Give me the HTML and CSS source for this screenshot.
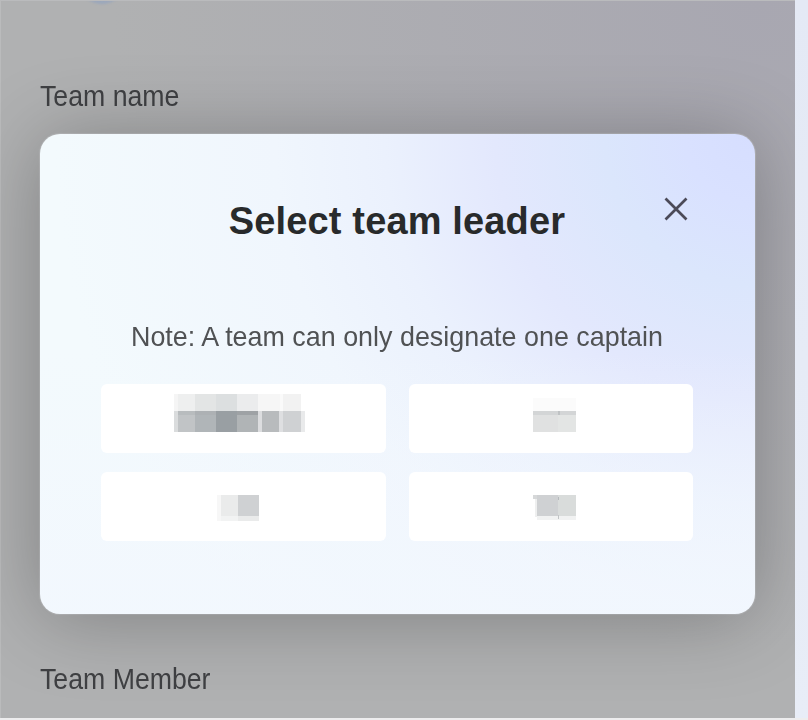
FILE: index.html
```html
<!DOCTYPE html>
<html lang="en">

<head>
  <meta charset="UTF-8">
  <title>Select team leader</title>
  <link rel="stylesheet" href="styles.css">
</head>

<body>
  <!-- Team form behind the dialog -->
  <div class="page">
    <div class="avatar"></div>
    <p class="label">Team name</p>
    <p class="label">Team Member</p>
  </div>

  <!-- Team leader dialog -->
  <div class="overlay">
    <div class="modal">
      <div class="header">
        <h1>Select team leader</h1>
        <button class="close" aria-label="Close">
          <svg width="24" height="24" viewBox="0 0 24 24">
            <path d="M1.5 1.5L22.5 22.5M22.5 1.5L1.5 22.5" />
          </svg>
        </button>
      </div>
      <p class="note">Note: A team can only designate one captain</p>

      <!-- Members to choose from, names are masked -->
      <div class="options">
        <div class="option">
          <svg class="mask" width="131" height="38" viewBox="0 0 131 38">
            <rect x="0" y="0" width="4" height="17" fill="#f5f5f5" />
            <rect x="4" y="0" width="17" height="17" fill="#eeefef" />
            <rect x="21" y="0" width="21" height="17" fill="#e3e5e5" />
            <rect x="42" y="0" width="21" height="17" fill="#dcdfe0" />
            <rect x="63" y="0" width="21" height="17" fill="#ebeced" />
            <rect x="84" y="0" width="22" height="17" fill="#f6f6f6" />
            <rect x="106" y="0" width="3" height="17" fill="#fafafa" />
            <rect x="109" y="0" width="18" height="17" fill="#f2f2f2" />
            <rect x="0" y="17" width="4" height="21" fill="#dadcdd" />
            <rect x="4" y="17" width="17" height="21" fill="#c1c4c6" />
            <rect x="21" y="17" width="21" height="21" fill="#b0b5b8" />
            <rect x="42" y="17" width="21" height="21" fill="#999fa3" />
            <rect x="63" y="17" width="21" height="21" fill="#b0b4b6" />
            <rect x="63" y="17" width="21" height="4" fill="#9ea2a5" />
            <rect x="84" y="17" width="4" height="21" fill="#dcdddf" />
            <rect x="88" y="17" width="17" height="21" fill="#b8bbbd" />
            <rect x="105" y="17" width="4" height="21" fill="#dedfe1" />
            <rect x="109" y="17" width="18" height="21" fill="#cfd1d3" />
            <rect x="127" y="17" width="4" height="21" fill="#e9eaeb" />
            <rect x="4" y="17" width="38" height="4" fill="#a4a9ac" opacity="0.3" />
          </svg>
        </div>
        <div class="option">
          <svg class="mask" width="43" height="34" viewBox="0 0 43 34">
            <rect x="0" y="0" width="43" height="13" fill="#fbfbfb" />
            <rect x="0" y="13" width="25" height="21" fill="#e0e1e1" />
            <rect x="25" y="13" width="18" height="21" fill="#e3e5e4" />
            <rect x="0" y="13" width="43" height="4" fill="#d3d5d6" />
            <rect x="25" y="13" width="2" height="4" fill="#bfc2c4" />
          </svg>
        </div>
        <div class="option third">
          <svg class="mask" width="42" height="26" viewBox="0 0 42 26">
            <rect x="0" y="0" width="4" height="26" fill="#f7f7f7" />
            <rect x="4" y="0" width="17" height="21" fill="#eaebeb" />
            <rect x="21" y="0" width="21" height="21" fill="#cfd1d3" />
            <rect x="4" y="21" width="17" height="5" fill="#f2f3f3" />
            <rect x="21" y="21" width="21" height="5" fill="#eaebeb" />
          </svg>
        </div>
        <div class="option fourth">
          <svg class="mask" width="43" height="26" viewBox="0 0 43 26">
            <rect x="0" y="0" width="4" height="4" fill="#d6d8d9" />
            <rect x="2" y="4" width="2" height="18" fill="#eeefef" />
            <rect x="4" y="0" width="21" height="21" fill="#cfd1d3" />
            <rect x="25" y="0" width="18" height="21" fill="#d9dcdb" />
            <rect x="4" y="21" width="39" height="4" fill="#f1f2f2" />
            <rect x="25" y="2" width="1" height="3" fill="#b6babd" />
            <rect x="25" y="20" width="1" height="4" fill="#c1c4c6" />
          </svg>
        </div>
      </div>
    </div>
  </div>
</body>

</html>
```

FILE: styles.css
```css
* {
  margin: 0;
  padding: 0;
  box-sizing: border-box;
  font-family: "Liberation Sans", Arial, sans-serif;
}

body {
  height: 720px;
  overflow: hidden;
  background: linear-gradient(#e4e9f5, #e8edf7);
  border-bottom: 2px solid #ededee;
}

/* Dimmed form */
.page {
  width: 795px;
  height: 718px;
  padding-left: 39px;
  overflow: hidden;
  display: flex;
  flex-direction: column;
  background: radial-gradient(circle at 760px 0, #a8a7b1, rgba(168, 167, 177, 0) 650px), #b0b1b2;
  border-top: 1px solid #babbbd;
  border-left: 1px solid #babbbc;
}

.avatar {
  width: 50px;
  height: 50px;
  margin: -47px 0 74px 37px;
  flex-shrink: 0;
  border-radius: 50%;
  background: #9ba7bb;
  filter: blur(1px);
}

.label {
  font-size: 29px;
  line-height: 36px;
  color: #3f4043;
  transform: scaleX(0.92);
  transform-origin: left;
}

.label + .label {
  margin-top: 547px;
}

/* Dialog */
.overlay {
  position: absolute;
  top: 0;
  left: 0;
  width: 795px;
  height: 718px;
  padding: 134px 40px 0;
  overflow: hidden;
}

.modal {
  height: 480px;
  padding: 62px 62px 0 61px;
  border-radius: 20px;
  background:
    linear-gradient(to bottom, rgba(242, 248, 254, 0) 45%, rgba(242, 247, 254, 0.7) 95%),
    radial-gradient(circle at 100% 0, #d6deff 0, #d9e1ff 70px, #dbe6fc 150px, #e3e8fd 260px, #ebf1fd 370px, #f0f6fd 480px, #f3fafd 700px);
  box-shadow: 0 4px 80px rgba(0, 0, 0, 0.28), 0 0 1px 1px rgba(200, 202, 205, 0.6);
}

.header {
  position: relative;
  text-align: center;
}

.header h1 {
  font-size: 38px;
  line-height: 51px;
  letter-spacing: 0.15px;
  color: #282a2b;
}

.close {
  position: absolute;
  top: 1px;
  right: 5px;
  width: 24px;
  height: 24px;
  border: 0;
  background: none;
  cursor: pointer;
}

.close path {
  stroke: #4b4a58;
  stroke-width: 2.7;
  fill: none;
}

.note {
  margin-top: 72px;
  font-size: 28px;
  line-height: 36px;
  text-align: center;
  white-space: nowrap;
  color: #505254;
  transform: scaleX(0.96);
}

.options {
  display: grid;
  grid-template-columns: 285px 284px;
  column-gap: 23px;
  row-gap: 19px;
  margin-top: 29px;
}

.option {
  display: flex;
  justify-content: center;
  align-items: flex-end;
  height: 69px;
  padding-bottom: 21px;
  padding-right: 8px;
  border-radius: 6px;
  background: #fff;
}

.option:nth-child(even) {
  padding-right: 0;
  padding-left: 7px;
}

.option.third {
  padding-right: 11px;
  padding-bottom: 20px;
}

.option.fourth {
  padding-bottom: 20px;
}
```
